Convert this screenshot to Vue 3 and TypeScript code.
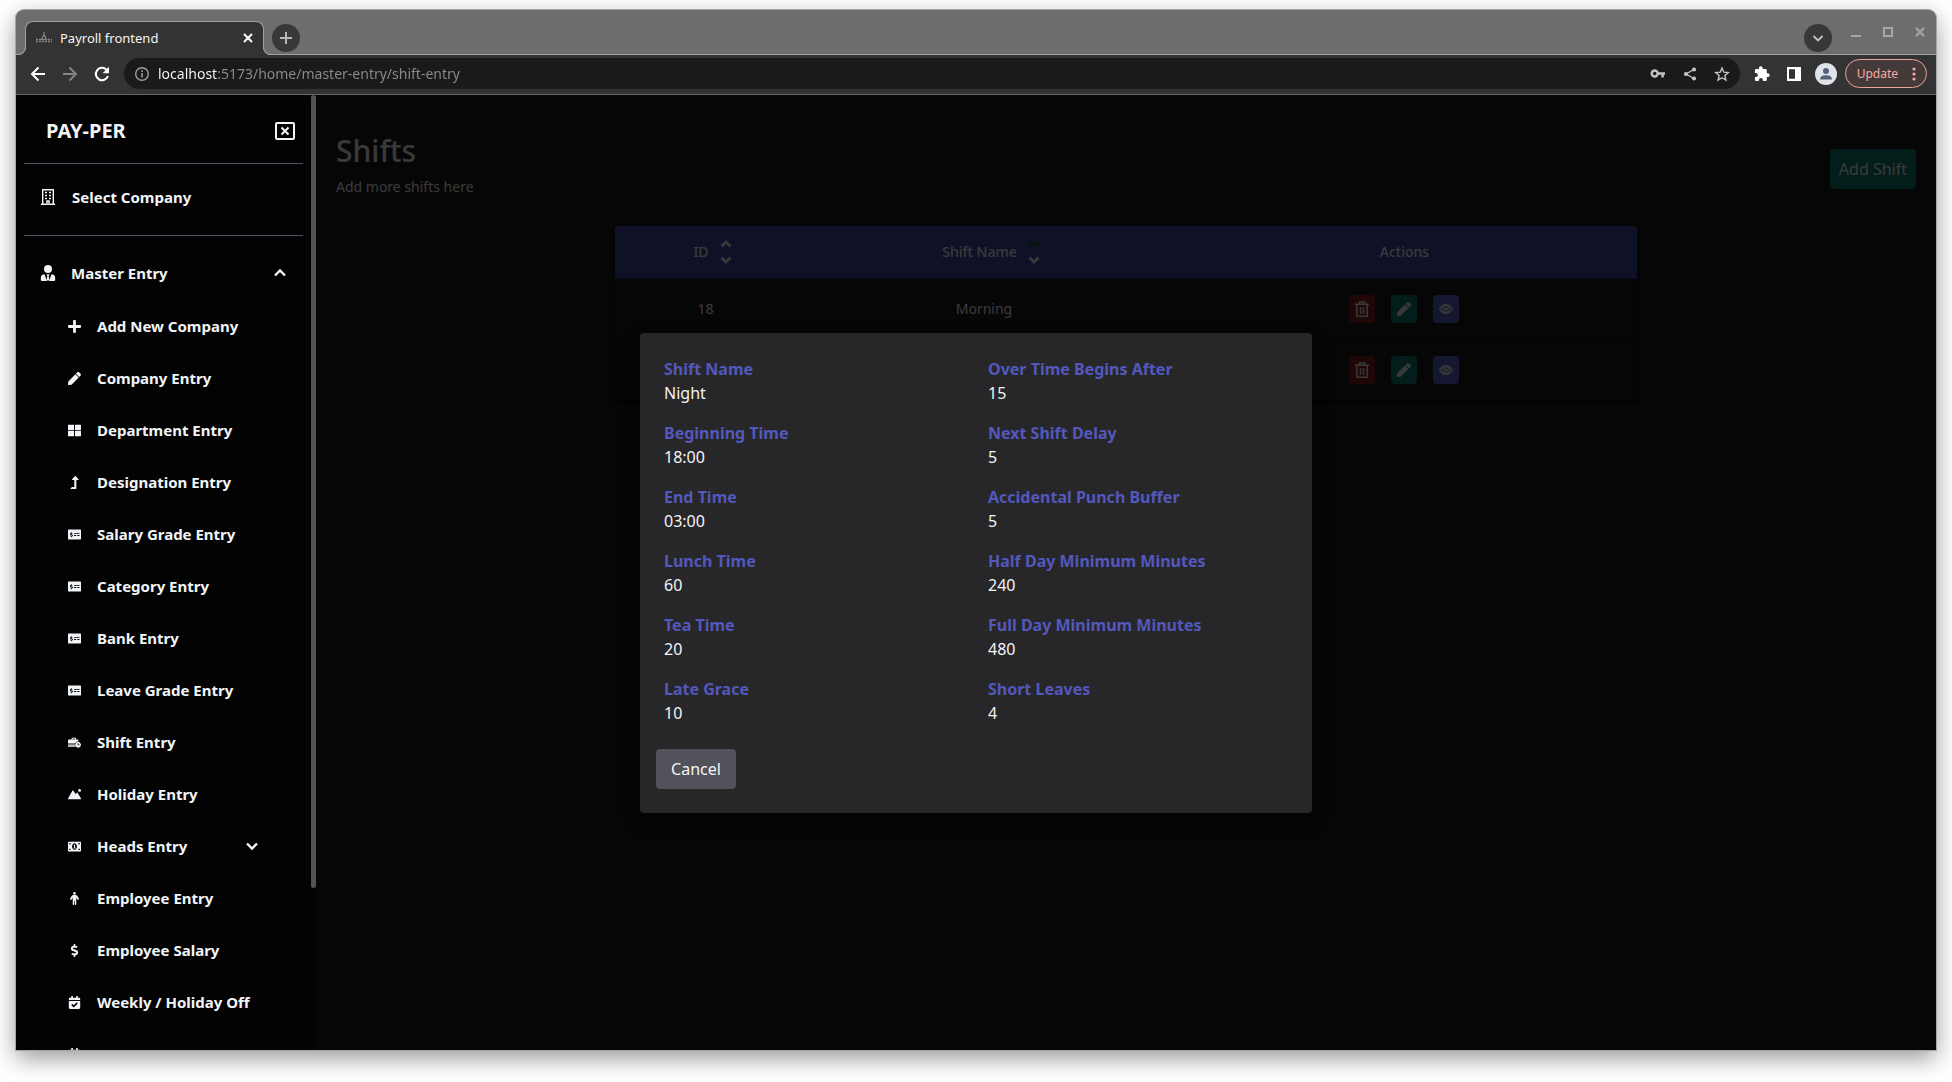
<script setup lang="ts">
import { ref } from 'vue'

interface NavItem {
  label: string
  icon: string
  expandable?: boolean
}

interface Shift {
  id?: number
  name?: string
}

interface Detail {
  label: string
  value: string
}

const address = ref('localhost:5173/home/master-entry/shift-entry')

const navItems: NavItem[] = [
  { label: 'Add New Company', icon: 'plus' },
  { label: 'Company Entry', icon: 'pen' },
  { label: 'Department Entry', icon: 'grid' },
  { label: 'Designation Entry', icon: 'levelUp' },
  { label: 'Salary Grade Entry', icon: 'cheque' },
  { label: 'Category Entry', icon: 'cheque' },
  { label: 'Bank Entry', icon: 'cheque' },
  { label: 'Leave Grade Entry', icon: 'cheque' },
  { label: 'Shift Entry', icon: 'briefcase' },
  { label: 'Holiday Entry', icon: 'mountain' },
  { label: 'Heads Entry', icon: 'bill', expandable: true },
  { label: 'Employee Entry', icon: 'person' },
  { label: 'Employee Salary', icon: 'dollar' },
  { label: 'Weekly / Holiday Off', icon: 'calendar' },
  { label: '', icon: 'calendar' },
]

const icons: Record<string, { box: string; d: string }> = {
  plus: {
    box: '0 0 448 448',
    d: 'M416 176H272V32c0-17.67-14.33-32-32-32h-32c-17.67 0-32 14.33-32 32v144H32c-17.67 0-32 14.33-32 32v32c0 17.67 14.33 32 32 32h144v144c0 17.67 14.33 32 32 32h32c17.67 0 32-14.33 32-32V272h144c17.67 0 32-14.33 32-32v-32c0-17.67-14.33-32-32-32z',
  },
  pen: {
    box: '0 0 512 512',
    d: 'M290.74 93.24l128.02 128.02-277.99 277.99-114.14 12.6C11.35 513.54-1.56 500.62.14 485.34l12.7-114.22 277.9-277.88zm207.2-19.06l-60.11-60.11c-18.75-18.75-49.16-18.75-67.91 0l-56.55 56.55 128.02 128.02 56.55-56.55c18.75-18.76 18.75-49.16 0-67.91z',
  },
  grid: {
    box: '0 0 512 512',
    d: 'M24 26h212v216H0V50q0-24 24-24zM276 26h212q24 0 24 24v192H276zM0 274h236v212H24q-24 0-24-24zM276 274h236v188q0 24-24 24H276z',
  },
  levelUp: {
    box: '0 0 320 512',
    d: 'M313.553 119.669L209.587 7.666c-9.485-10.214-25.676-10.229-35.174 0L70.438 119.669C56.232 134.969 67.062 160 88.025 160H152v272H68.024a11.996 11.996 0 0 0-8.485 3.515l-56 56C-4.021 499.074 1.333 512 12.024 512H208c13.255 0 24-10.745 24-24V160h63.966c20.878 0 31.851-24.969 17.587-40.331z',
  },
  cheque: {
    box: '0 0 640 512',
    d: 'M24 10h592q24 0 24 24v444q0 24-24 24H24q-24 0-24-24V34q0-24 24-24zM152 140v30q-56 8-56 58 0 38 54 54 44 12 44 24 0 14-28 14-26 0-44-16l-26 30q22 20 56 24v32h36v-32q54-10 54-58 0-42-60-60-38-12-38-22 0-12 24-12 20 0 38 12l24-32q-18-14-42-18v-30zM296 180v44h272v-44zM296 284v44h108v-44zM460 284v44h108v-44z',
  },
  briefcase: {
    box: '0 0 640 512',
    d: 'M176 112V66q0-46 46-46h132q46 0 46 46v46h72q40 0 40 40v60q-90-8-146 64H0V152q0-40 40-40zm48 0h128V68H224zM0 308h344q-12 26-10 52H0zM0 392h340q8 42 38 78H40Q0 470 0 440zM496 232a140 140 0 1 0 1 0zm-18 60h36v68h52v36h-88z',
  },
  mountain: {
    box: '0 0 640 512',
    d: 'M8 440L214 76q26-36 54 0l108 172 56-74q26-28 48 4l152 262q20 52-28 52H36q-50 0-28-52zM570 -10a68 68 0 1 0 1 0z',
  },
  bill: {
    box: '0 0 640 512',
    d: 'M36 16h568q36 0 36 36v408q0 36-36 36H36q-36 0-36-36V52q0-36 36-36zM320 96c-74 0-120 70-120 160s46 160 120 160 120-70 120-160S394 96 320 96zM280 176l36-24h34v164h28v36H270v-36h28V206h-18zM60 80v80q74-6 80-80zM500 80q6 74 80 80V80zM60 352v80h80q-6-74-80-80zM580 352q-74 6-80 80h80z',
  },
  person: {
    box: '0 0 360 512',
    d: 'M180 0a54 54 0 1 1-1 0zM130 122h100q36 0 56 30l68 108q12 26-14 42-28 14-46-10l-44-64v256q0 28-30 28-28 0-28-28V346h-24v138q0 28-28 28-30 0-30-28V228l-44 64q-18 24-46 10-26-16-14-42l68-108q20-30 56-30z',
  },
  dollar: {
    box: '0 0 288 512',
    d: 'M209.2 233.4l-108-31.6C88.7 198.2 80 186.5 80 173.5c0-16.3 13.2-29.5 29.5-29.5h66.3c12.2 0 24.2 3.7 34.2 10.5 6.1 4.1 14.3 3.1 19.5-2l34.8-34c7.1-6.9 6.1-18.4-1.8-24.5C238 74.8 207.4 64.1 176 64V16c0-8.8-7.2-16-16-16h-32c-8.8 0-16 7.2-16 16v48h-2.5C45.8 64-5.4 118.7.5 183.6c4.2 46.1 39.4 83.6 83.8 96.6l102.5 30c12.5 3.7 21.2 15.3 21.2 28.3 0 16.3-13.2 29.5-29.5 29.5h-66.3C100 368 88 364.3 78 357.5c-6.1-4.1-14.3-3.1-19.5 2l-34.8 34c-7.1 6.9-6.1 18.4 1.8 24.5 24.5 19.2 55.1 29.9 86.5 30v48c0 8.8 7.2 16 16 16h32c8.8 0 16-7.2 16-16v-48.2c46.6-.9 90.3-28.6 105.7-72.7 21.5-61.6-14.6-124.8-72.5-141.7z',
  },
  calendar: {
    box: '0 0 448 512',
    d: 'M436 160H12c-6.627 0-12-5.373-12-12v-36c0-26.51 21.49-48 48-48h48V12c0-6.627 5.373-12 12-12h40c6.627 0 12 5.373 12 12v52h128V12c0-6.627 5.373-12 12-12h40c6.627 0 12 5.373 12 12v52h48c26.51 0 48 21.49 48 48v36c0 6.627-5.373 12-12 12zM12 192h424c6.627 0 12 5.373 12 12v260c0 26.51-21.49 48-48 48H48c-26.51 0-48-21.49-48-48V204c0-6.627 5.373-12 12-12zm333.296 95.947l-28.169-28.398c-4.667-4.705-12.265-4.736-16.97-.068L194.12 364.665l-45.98-46.352c-4.667-4.705-12.266-4.736-16.971-.068l-28.397 28.17c-4.705 4.667-4.736 12.265-.068 16.97l82.601 83.269c4.667 4.705 12.265 4.736 16.97.068l142.953-141.805c4.705-4.667 4.736-12.265.068-16.97z',
  },
}

const shifts: Shift[] = [{ id: 18, name: 'Morning' }, {}]

const details: Detail[] = [
  { label: 'Shift Name', value: 'Night' },
  { label: 'Over Time Begins After', value: '15' },
  { label: 'Beginning Time', value: '18:00' },
  { label: 'Next Shift Delay', value: '5' },
  { label: 'End Time', value: '03:00' },
  { label: 'Accidental Punch Buffer', value: '5' },
  { label: 'Lunch Time', value: '60' },
  { label: 'Half Day Minimum Minutes', value: '240' },
  { label: 'Tea Time', value: '20' },
  { label: 'Full Day Minimum Minutes', value: '480' },
  { label: 'Late Grace', value: '10' },
  { label: 'Short Leaves', value: '4' },
]
</script>

<template>
  <div class="desktop">
    <div class="window">
      <header class="tabstrip">
        <div class="tab">
          <svg class="favicon" viewBox="0 0 16 16" aria-hidden="true">
            <path d="M8 2v3M5.500 9.500L8 4.500l2.500 5z" fill="none" stroke="#8a8a8a" stroke-width="1.200" />
            <path d="M0 9.500h16M0 11.500h16" stroke="#858585" stroke-width="1.600" stroke-dasharray="2 1" />
          </svg>
          <span class="tab-title">Payroll frontend</span>
          <button class="bare" aria-label="Close tab">
            <svg width="16" height="16" viewBox="0 0 16 16">
              <path d="M4 4l8 8M12 4l-8 8" stroke="#fff" stroke-width="2" />
            </svg>
          </button>
        </div>
        <button class="round" aria-label="New tab">
          <svg width="14" height="14" viewBox="0 0 14 14">
            <path d="M7 1v12M1 7h12" stroke="#b8b8b8" stroke-width="2" />
          </svg>
        </button>
        <div class="grow"></div>
        <button class="round" aria-label="Search tabs">
          <svg width="14" height="14" viewBox="0 0 14 14">
            <path d="M2.500 5L7 9.500l4.500-4.500" fill="none" stroke="#c4c4c4" stroke-width="1.800" />
          </svg>
        </button>
        <div class="window-controls">
          <button class="bare" aria-label="Minimise">
            <svg width="16" height="16" viewBox="0 0 16 16"><path d="M3 12h10" stroke="#a8a8a8" stroke-width="2" /></svg>
          </button>
          <button class="bare" aria-label="Maximise">
            <svg width="16" height="16" viewBox="0 0 16 16">
              <path d="M4 4h8v8H4z" fill="none" stroke="#a8a8a8" stroke-width="2" />
            </svg>
          </button>
          <button class="bare" aria-label="Close window">
            <svg width="16" height="16" viewBox="0 0 16 16">
              <path d="M4 4l8 8M12 4l-8 8" stroke="#a8a8a8" stroke-width="2" />
            </svg>
          </button>
        </div>
      </header>

      <div class="toolbar">
        <div class="nav-buttons">
          <button class="bare" aria-label="Back">
            <svg width="16" height="16" viewBox="0 0 16 16">
              <path d="M15 8H2M8.500 1.500L2 8l6.500 6.500" fill="none" stroke="#fff" stroke-width="2" />
            </svg>
          </button>
          <button class="bare" aria-label="Forward">
            <svg width="16" height="16" viewBox="0 0 16 16">
              <path d="M1 8h13M7.500 1.500L14 8l-6.500 6.500" fill="none" stroke="#848484" stroke-width="2" />
            </svg>
          </button>
          <button class="bare" aria-label="Reload">
            <svg width="16" height="16" viewBox="0 0 16 16">
              <path d="M13.900 10A6.200 6.200 0 1 1 12.500 3.700" fill="none" stroke="#fff" stroke-width="2.100" />
              <path d="M15 .8v6.400H8.600z" fill="#fff" />
            </svg>
          </button>
        </div>
        <div class="omnibox">
          <svg width="16" height="16" viewBox="0 0 16 16" aria-hidden="true">
            <circle cx="8" cy="8" r="6.300" fill="none" stroke="#9aa0a6" stroke-width="1.400" />
            <path d="M8 7v4.500M8 4.200v1.700" stroke="#9aa0a6" stroke-width="1.600" />
          </svg>
          <input v-model="address" class="address" aria-label="Address" spellcheck="false" />
          <button class="bare" aria-label="Passwords">
            <svg width="16" height="16" viewBox="0 0 16 16">
              <circle cx="4.700" cy="7.500" r="3" fill="none" stroke="#c4c4c4" stroke-width="2.400" />
              <path d="M8 7.500h7M12.600 7.500v4" fill="none" stroke="#c4c4c4" stroke-width="2.400" />
            </svg>
          </button>
          <button class="bare" aria-label="Share">
            <svg width="16" height="16" viewBox="0 0 16 16">
              <path d="M12 3.500L4 8l8 4.500" fill="none" stroke="#c4c4c4" stroke-width="1.400" />
              <g fill="#c4c4c4">
                <circle cx="12" cy="3.500" r="2.100" />
                <circle cx="4" cy="8" r="2.100" />
                <circle cx="12" cy="12.500" r="2.100" />
              </g>
            </svg>
          </button>
          <button class="bare" aria-label="Bookmark">
            <svg width="16" height="16" viewBox="0 0 16 16">
              <path
                d="M8 2l1.800 4.200 4.500.4-3.400 3 1 4.400L8 11.700 4.100 14l1-4.400-3.400-3 4.500-.4z"
                fill="none"
                stroke="#c4c4c4"
                stroke-width="1.400"
              />
            </svg>
          </button>
        </div>
        <div class="extras">
          <button class="bare" aria-label="Extensions">
            <svg width="16" height="16" viewBox="0 0 16 16">
              <path
                d="M13.800 7.300h-1V4.400q0-1.300-1.300-1.300H8.600v-1a1.850 1.850 0 0 0-3.700 0v1H2.200Q.9 3.100.9 4.400v2.700h1a2 2 0 0 1 0 4h-1v2.700q0 1.300 1.300 1.300h2.700v-1a2 2 0 0 1 4 0v1h2.600q1.300 0 1.300-1.300v-2.800h1a1.850 1.850 0 0 0 0-3.700z"
                fill="#fff"
              />
            </svg>
          </button>
          <button class="bare" aria-label="Side panel">
            <svg width="16" height="16" viewBox="0 0 16 16">
              <path d="M1 1h14v14H1zM3 3.200v9.600h6V3.200z" fill="#fff" fill-rule="evenodd" />
            </svg>
          </button>
          <button class="bare" aria-label="Profile">
            <svg width="22" height="22" viewBox="0 0 22 22">
              <circle cx="11" cy="11" r="11" fill="#dfe3ea" />
              <circle cx="11" cy="8" r="3" fill="#56627a" />
              <path d="M5 16.500q0-4.300 6-4.300t6 4.300z" fill="#56627a" />
            </svg>
          </button>
        </div>
        <button class="update">
          <span>Update</span>
          <svg width="4" height="14" viewBox="0 0 4 14" aria-hidden="true">
            <g fill="#f7aaa2"><circle cx="2" cy="2" r="1.600" /><circle cx="2" cy="7" r="1.600" /><circle cx="2" cy="12" r="1.600" /></g>
          </svg>
        </button>
      </div>

      <div class="page">
        <aside class="sidebar">
          <nav class="nav">
            <div class="brand">
              <span class="brand-name">PAY-PER</span>
              <button class="bare" aria-label="Close menu">
                <svg width="20" height="18" viewBox="0 0 20 18">
                  <rect x="1" y="1" width="18" height="16" rx="1" fill="none" stroke="#f1f5f9" stroke-width="2" />
                  <path d="M6.500 5.500l7 7M13.500 5.500l-7 7" stroke="#f1f5f9" stroke-width="2" />
                </svg>
              </button>
            </div>
            <a href="#" class="group company">
              <svg width="16" height="16" viewBox="0 0 16 16" aria-hidden="true">
                <path d="M2.700 15V.7h10.600V15" fill="none" stroke="#f1f5f9" stroke-width="1.400" />
                <path d="M1 15.300h5.500M9.500 15.300H15" stroke="#f1f5f9" stroke-width="1.400" />
                <path
                  d="M5 3.500h2M9 3.500h2M5 6.500h2M9 6.500h2M5 9.500h2M9 9.500h2M7 12h2v4H7z"
                  stroke="#f1f5f9"
                  stroke-width="1.500"
                />
              </svg>
              <span>Select Company</span>
            </a>
            <a href="#" class="group">
              <svg width="16" height="16" viewBox="0 0 16 16" aria-hidden="true" fill="#f1f5f9">
                <circle cx="8" cy="4" r="4" />
                <path d="M4.500 9.200L7 16H2.200Q.8 16 .8 14.500v-1.800Q.8 9.500 4.500 9.200zM11.500 9.200L9 16h4.800q1.400 0 1.400-1.500v-1.800q0-3.200-3.700-3.500zM6.300 9.200h3.400L8.600 11l.8 3.500L8 16l-1.400-1.500.8-3.500z" />
              </svg>
              <span class="grow">Master Entry</span>
              <svg width="12" height="12" viewBox="0 0 12 12" aria-hidden="true">
                <path d="M1 8.500l5-5 5 5" fill="none" stroke="#f1f5f9" stroke-width="2.400" />
              </svg>
            </a>
            <ul class="entries">
              <li v-for="(item, i) in navItems" :key="i">
                <a href="#" class="entry">
                  <svg width="13" height="13" :viewBox="icons[item.icon].box" aria-hidden="true">
                    <path :d="icons[item.icon].d" fill="#f1f5f9" fill-rule="evenodd" />
                  </svg>
                  <span class="grow">{{ item.label }}</span>
                  <svg v-if="item.expandable" width="12" height="12" viewBox="0 0 12 12" aria-hidden="true">
                    <path d="M1 3.500l5 5 5-5" fill="none" stroke="#f1f5f9" stroke-width="2.400" />
                  </svg>
                </a>
              </li>
            </ul>
          </nav>
          <div class="track"><div class="thumb"></div></div>
        </aside>

        <main class="main">
          <div class="heading">
            <div>
              <h1>Shifts</h1>
              <p>Add more shifts here</p>
            </div>
            <button class="add">Add Shift</button>
          </div>
          <table class="shifts">
            <colgroup>
              <col class="col-id" />
              <col class="col-name" />
              <col />
            </colgroup>
            <thead>
              <tr>
                <th v-for="head in ['ID', 'Shift Name']" :key="head" scope="col">
                  <div class="sortable">
                    <span>{{ head }}</span>
                    <svg width="12" height="24" viewBox="0 0 12 24" aria-hidden="true">
                      <path
                        d="M1.500 6.500L6 2l4.500 4.500"
                        fill="none"
                        :stroke="head === 'ID' ? '#e4e4e7' : '#14532d'"
                        stroke-width="2.800"
                      />
                      <path d="M1.500 17.500L6 22l4.500-4.500" fill="none" stroke="#e4e4e7" stroke-width="2.800" />
                    </svg>
                  </div>
                </th>
                <th scope="col">Actions</th>
              </tr>
            </thead>
            <tbody>
              <tr v-for="(shift, i) in shifts" :key="i">
                <td>{{ shift.id }}</td>
                <td>{{ shift.name }}</td>
                <td>
                  <div class="actions">
                    <button class="action delete" aria-label="Delete">
                      <svg width="14" height="16" viewBox="0 0 14 16">
                        <path
                          d="M0 3.200h14M4.500 3V1h5v2M1.800 3.500v11.800h10.400V3.500M5.500 6v7M8.500 6v7"
                          fill="none"
                          stroke="#e4e4e7"
                          stroke-width="1.500"
                        />
                      </svg>
                    </button>
                    <button class="action edit" aria-label="Edit">
                      <svg width="14" height="14" :viewBox="icons.pen.box"><path :d="icons.pen.d" fill="#e4e4e7" /></svg>
                    </button>
                    <button class="action view" aria-label="View">
                      <svg width="14" height="14" viewBox="0 0 14 14">
                        <path d="M.7 7Q3 2.700 7 2.700T13.300 7Q11 11.300 7 11.300T.7 7z" fill="none" stroke="#e4e4e7" stroke-width="1.500" />
                        <circle cx="7" cy="7" r="3.300" fill="none" stroke="#e4e4e7" stroke-width="1.200" />
                        <circle cx="7" cy="7" r="1.800" fill="#e4e4e7" />
                      </svg>
                    </button>
                  </div>
                </td>
              </tr>
            </tbody>
          </table>
        </main>

        <div class="overlay">
          <section class="dialog" role="dialog" aria-modal="true" aria-label="Shift details">
            <dl class="details">
              <div v-for="detail in details" :key="detail.label">
                <dt>{{ detail.label }}</dt>
                <dd>{{ detail.value }}</dd>
              </div>
            </dl>
            <button class="cancel">Cancel</button>
          </section>
        </div>
      </div>
    </div>
  </div>
</template>

<style>
body {
  margin: 0;
  background: #fff;
}
</style>

<style scoped>
* {
  box-sizing: border-box;
}

.desktop {
  height: 100vh;
  padding: 10px 16px 32px;
  overflow: hidden;
  font-family: 'Noto Sans', sans-serif;
  font-size: 16px;
  line-height: 24px;
  color: #e4e4e7;
}

.window {
  display: flex;
  flex-direction: column;
  height: 100%;
  border-radius: 8px 8px 0 0;
  background: #6d6d6d;
  box-shadow:
    0 0 0 1px #a6a6a6,
    0 8px 24px rgba(0, 0, 0, 0.42);
}

button {
  font: inherit;
  border: 0;
  cursor: pointer;
}

.bare {
  display: flex;
  padding: 0;
  background: none;
}

.grow {
  flex: 1;
}

svg {
  flex: none;
}

/* Browser chrome */
.tabstrip {
  display: flex;
  align-items: center;
  height: 45px;
  padding: 11px 8px 0 9px;
  border-bottom: 1px solid #a0a0a0;
  border-radius: 8px 8px 0 0;
}

.tab {
  position: relative;
  display: flex;
  align-items: center;
  align-self: stretch;
  width: 239px;
  margin: 0 8px -1px 0;
  padding: 0 7px 2px 10px;
  border: 1px solid #a0a0a0;
  border-bottom: 0;
  border-radius: 8px 8px 0 0;
  background: #333;
}

.tab::before,
.tab::after {
  content: '';
  position: absolute;
  bottom: 0;
  width: 8px;
  height: 8px;
  border-bottom: 1px solid #a0a0a0;
}

.tab::before {
  right: 100%;
  border-right: 1px solid #a0a0a0;
  border-bottom-right-radius: 8px;
  box-shadow: 3px 3px 0 0 #333;
  clip-path: inset(0 -1px 0 0);
}

.tab::after {
  left: 100%;
  border-left: 1px solid #a0a0a0;
  border-bottom-left-radius: 8px;
  box-shadow: -3px 3px 0 0 #333;
  clip-path: inset(0 0 0 -1px);
}

.favicon {
  width: 16px;
  height: 16px;
}

.tab-title {
  flex: 1;
  margin-left: 8px;
  font-size: 13px;
  color: #f5f5f5;
}

.round {
  display: flex;
  align-items: center;
  justify-content: center;
  width: 28px;
  height: 28px;
  padding: 0;
  border-radius: 50%;
  background: #383838;
}

.window-controls {
  display: flex;
  gap: 16px;
  margin: 0 0 12px 16px;
}

.toolbar {
  display: flex;
  align-items: center;
  height: 40px;
  padding: 0 9px 2px 14px;
  border-bottom: 1px solid #666;
  background: #333;
}

.nav-buttons {
  display: flex;
  gap: 16px;
}

.omnibox {
  display: flex;
  flex: 1;
  align-items: center;
  gap: 16px;
  height: 31px;
  margin: 0 14px;
  padding: 0 10px;
  border-radius: 16px;
  background: #1a1a1a;
}

.address {
  flex: 1;
  min-width: 0;
  height: 24px;
  margin-left: -8px;
  padding: 0;
  border: 0;
  outline: 0;
  font: inherit;
  font-size: 14px;
  background: linear-gradient(90deg, #fff 60px, #8c8c8c 60px);
  background-clip: text;
  -webkit-text-fill-color: transparent;
}

.extras {
  display: flex;
  align-items: center;
  gap: 16px;
}

.extras .bare:last-child {
  margin-left: -3px;
}

.update {
  display: flex;
  align-items: center;
  gap: 14px;
  height: 29px;
  margin-left: 8px;
  padding: 0 10px 0 11px;
  border: 1px solid #f0a39b;
  border-radius: 15px;
  background: #443a3a;
  font-size: 12px;
  color: #f7aaa2;
}

/* Application */
.page {
  position: relative;
  display: flex;
  flex: 1;
  min-height: 0;
  overflow: hidden;
  background: #18181b;
}

.sidebar {
  position: relative;
  z-index: 2;
  display: flex;
  flex: none;
  width: 300px;
  background: #030303;
}

.nav {
  flex: 1;
  padding: 8px;
  overflow: hidden;
}

.track {
  width: 5px;
}

.thumb {
  height: 83%;
  border-radius: 3px;
  background: #52525b;
}

.brand {
  display: flex;
  align-items: center;
  justify-content: space-between;
  height: 60px;
  padding: 0 8px 4px 22px;
}

.brand-name {
  font-size: 20px;
  font-weight: 700;
  color: #f1f5f9;
}

.group,
.entry {
  display: flex;
  align-items: center;
  height: 42px;
  font-size: 15px;
  font-weight: 700;
  color: #f1f5f9;
  text-decoration: none;
}

.group {
  gap: 15px;
  margin-top: 16px;
  padding: 0 17px 0 16px;
}

.company {
  gap: 16px;
  height: 73px;
  margin-top: 0;
  padding-bottom: 5px;
  border: solid #4b5563;
  border-width: 1px 0;
}

.entries {
  margin: 0;
  padding: 1px 0 0;
  list-style: none;
}

.entry {
  gap: 16px;
  margin-top: 10px;
  padding: 0 45px 0 44px;
}

.main {
  flex: 1;
  padding: 36px 20px;
}

.heading {
  display: flex;
  align-items: flex-start;
  justify-content: space-between;
}

h1 {
  margin: 0;
  font-size: 30px;
  font-weight: 500;
  line-height: 40px;
}

p {
  margin: 4px 0 0;
  font-size: 14px;
}

.add {
  height: 40px;
  margin-top: 18px;
  padding: 0 9px;
  border-radius: 4px;
  background: #0f766e;
  color: #e4e4e7;
}

.shifts {
  width: 1022px;
  margin: 27px auto 0;
  border-collapse: separate;
  border-spacing: 0;
  table-layout: fixed;
  border-radius: 4px;
  box-shadow: 0 1px 3px #0c0c0d;
  overflow: hidden;
  font-size: 14px;
  text-align: center;
}

.col-id {
  width: 181px;
}

.col-name {
  width: 376px;
}

th {
  height: 53px;
  padding: 0;
  border-bottom: 1px solid #262a5c;
  background: #3e4396;
  font-weight: 500;
}

td {
  height: 61px;
  padding: 0;
  border-bottom: 1px solid #09090b;
}

.sortable,
.actions {
  display: flex;
  align-items: center;
  justify-content: center;
}

.sortable {
  gap: 11px;
  padding-left: 14px;
}

.actions {
  gap: 16px;
  padding-right: 2px;
}

.action {
  display: flex;
  align-items: center;
  justify-content: center;
  width: 26px;
  height: 28px;
  padding: 0;
  border-radius: 4px;
}

.delete {
  background: #7f1d1d;
}

.edit {
  background: #0f766e;
}

.view {
  background: #5358bd;
}

.overlay {
  position: absolute;
  inset: 0;
  display: flex;
  align-items: center;
  justify-content: center;
  background: rgba(0, 0, 0, 0.75);
}

.dialog {
  width: 672px;
  padding: 24px 16px;
  border-radius: 4px;
  background: #27272a;
  box-shadow: 0 8px 16px rgba(0, 0, 0, 0.4);
}

.details {
  display: grid;
  grid-template-columns: 1fr 1fr;
  gap: 16px 24px;
  margin: 0 0 24px;
  padding: 0 8px;
}

dt {
  font-weight: 700;
  color: #5358bd;
}

dd {
  margin: 0;
  color: #f4f4f5;
}

.cancel {
  width: 80px;
  height: 40px;
  padding: 0;
  border-radius: 4px;
  background: #52525b;
  color: #f4f4f5;
}
</style>
